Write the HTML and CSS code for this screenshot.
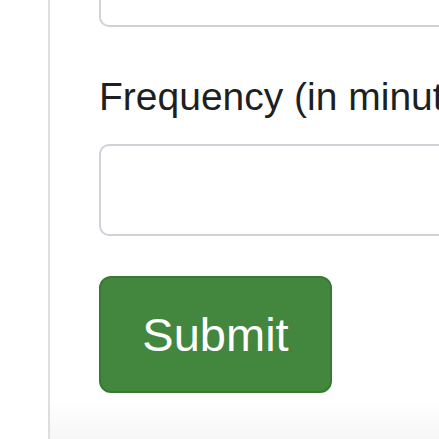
FILE: index.html
```html
<!DOCTYPE html>
<html lang="en">
<head>
<meta charset="utf-8">
<title>Form</title>
<link rel="stylesheet" href="styles.css">
</head>
<body>
<div class="page">
  <div class="card">
    <form class="card-body">
      <div class="form-group first">
        <input class="form-control" type="text" aria-label="Previous field">
      </div>
      <div class="form-group">
        <label class="form-label" for="freq">Frequency (in minutes)</label>
        <input class="form-control" id="freq" type="text">
      </div>
      <button class="btn-submit" type="submit">Submit</button>
    </form>
  </div>
</div>
</body>
</html>
```

FILE: styles.css
```css
html, body {
  margin: 0;
  padding: 0;
  overflow: hidden;
  background: #ffffff;
}

body {
  font-family: "Liberation Sans", Arial, sans-serif;
  color: #212529;
}

.page {
  padding-left: 48px;
  height: 439px;
}

.card {
  border-left: 2px solid #dcdee0;
  height: 439px;
  width: 600px;
  background: linear-gradient(to bottom, #ffffff 0, #ffffff 400px, #f6f6f6 439px);
}

.card-body {
  padding-left: 49px;
  display: flex;
  flex-direction: column;
  align-items: flex-start;
}

.form-group {
  display: flex;
  flex-direction: column;
  margin-bottom: 40px;
}

.form-group.first {
  margin-top: -65px;
}

.form-label {
  display: block;
  font-size: 39px;
  line-height: 55px;
  padding-top: 2px;
  margin-bottom: 20px;
  white-space: nowrap;
  color: #1d1f22;
}

.form-control {
  box-sizing: border-box;
  width: 520px;
  height: 92px;
  border: 2px solid #cfd3d8;
  border-radius: 10px;
  background: #ffffff;
  margin: 0;
  padding: 0 30px;
  font-size: 39px;
  font-family: inherit;
}

.btn-submit {
  box-sizing: border-box;
  width: 233px;
  height: 117px;
  margin: 0;
  padding: 0;
  background: #43873f;
  border: 2px solid #377a33;
  border-radius: 12px;
  color: #ffffff;
  font-family: "Liberation Sans", Arial, sans-serif;
  font-size: 47px;
  line-height: 1;
}
```
